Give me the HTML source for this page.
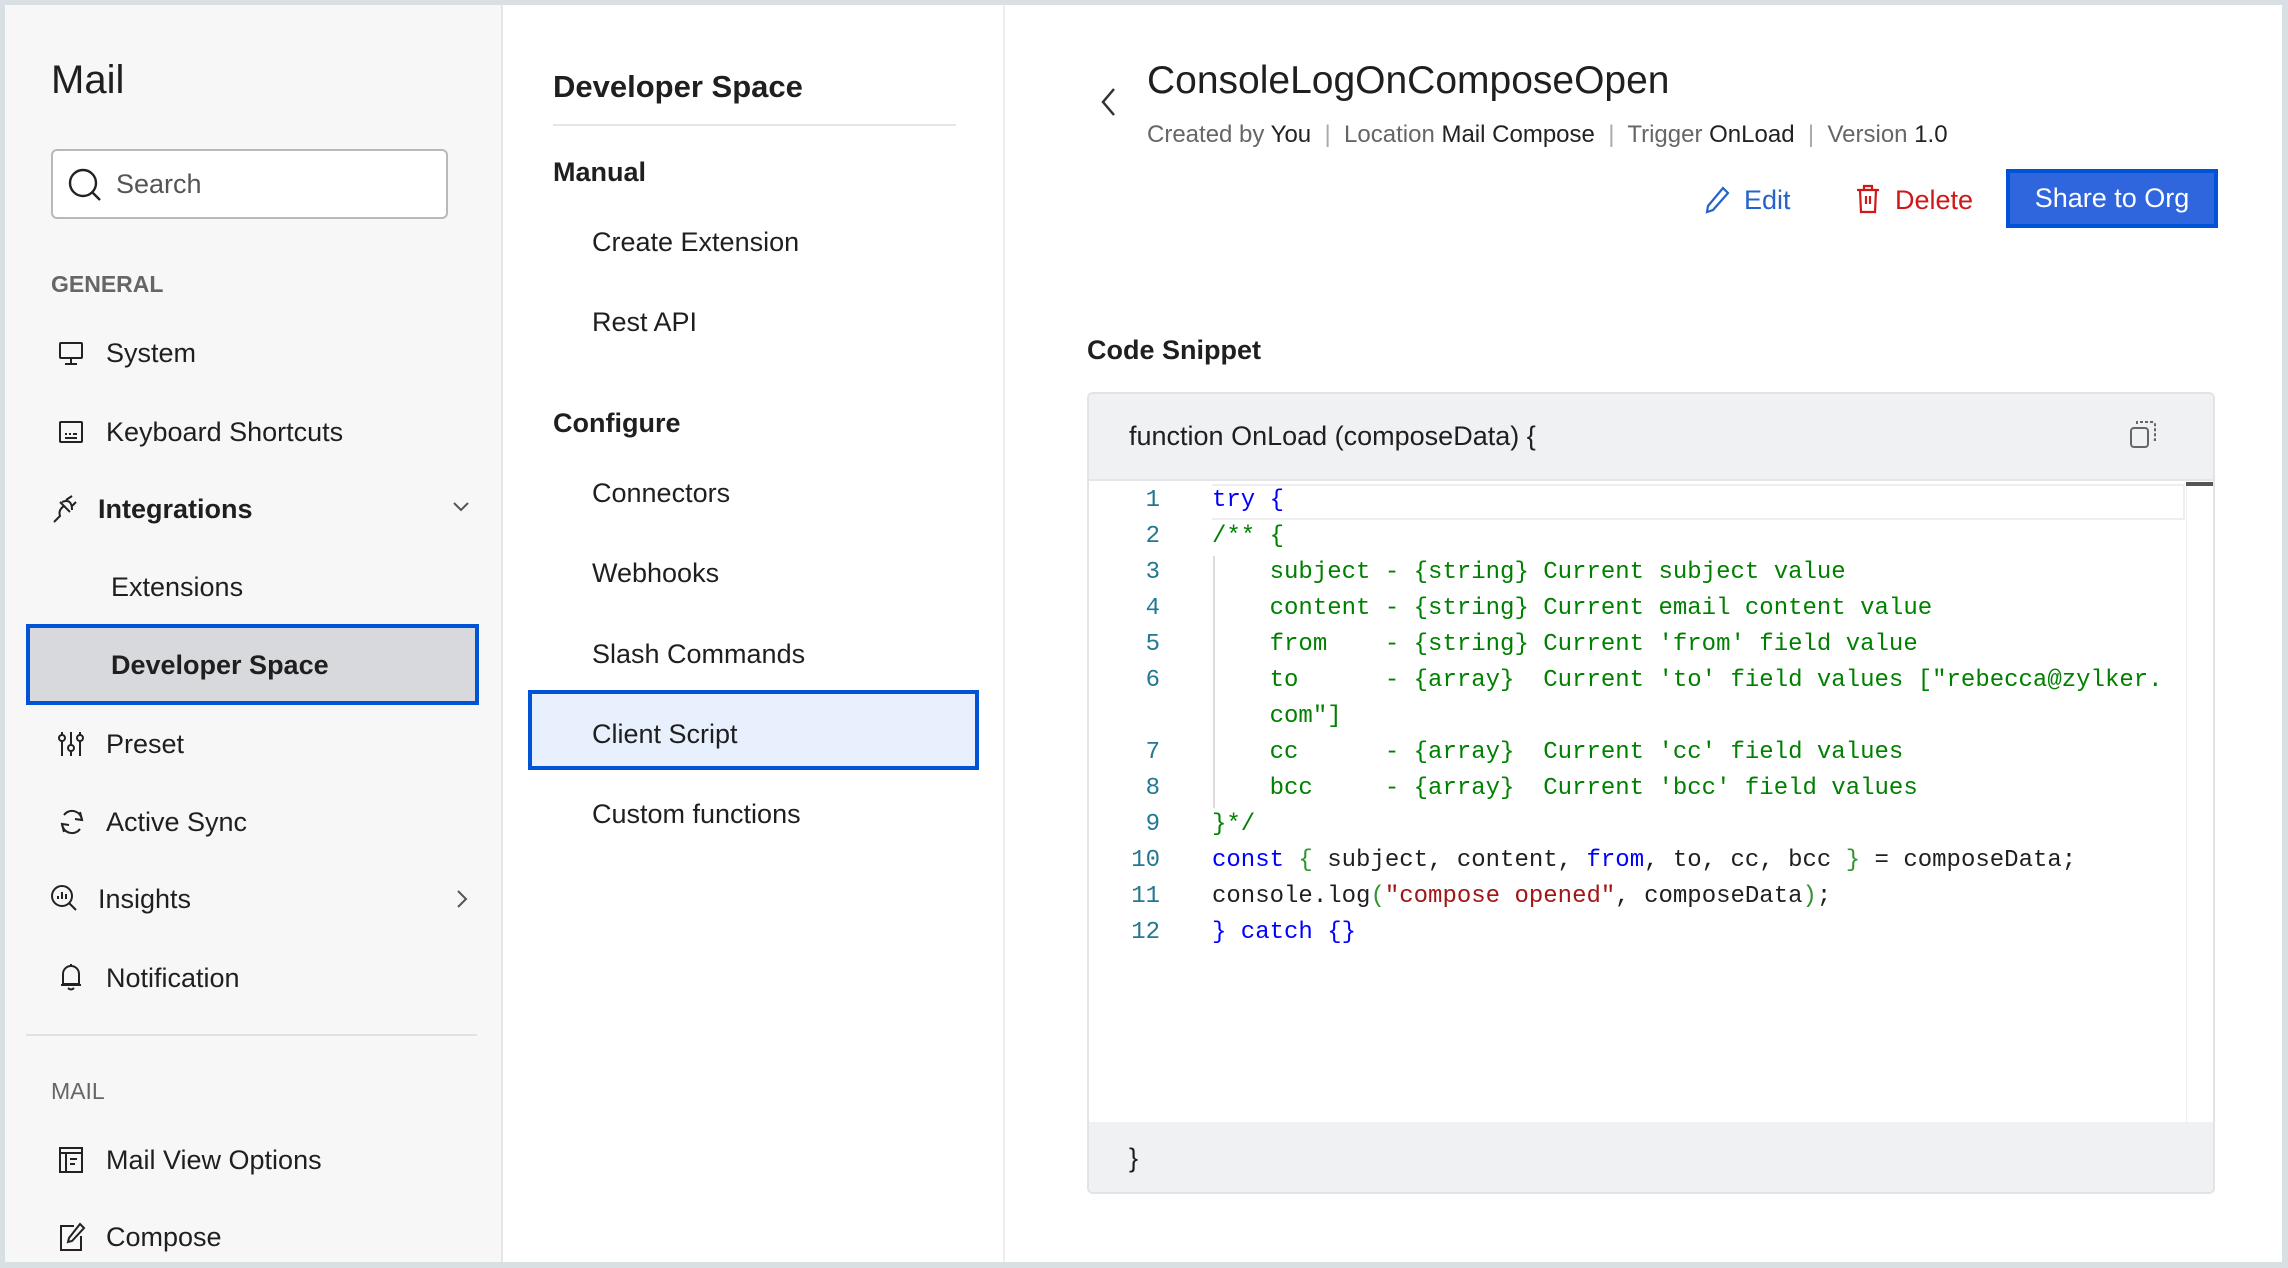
<!DOCTYPE html>
<html><head><meta charset="utf-8"><style>
*{margin:0;padding:0;box-sizing:border-box}
body{width:2288px;height:1268px;background:#d9e0e4;font-family:"Liberation Sans",sans-serif;color:#1f1f1f;position:relative;overflow:hidden}
.abs{position:absolute;white-space:nowrap}
#side{position:absolute;left:5px;top:5px;width:498px;height:1257px;background:#f7f7f7;border-right:2px solid #e6e6e6}
#mid{position:absolute;left:503px;top:5px;width:502px;height:1257px;background:#fff;border-right:2px solid #eeeeee}
#right{position:absolute;left:1005px;top:5px;width:1277px;height:1257px;background:#fff}
.t{font-size:27px;line-height:36px}
.ic{position:absolute}
.mono{font-family:"Liberation Mono",monospace;font-size:24px;line-height:36px}
pre.mono{white-space:pre}
.g{color:#008000}.b{color:#0000ff}.s{color:#a31515}.p{color:#319331}
.ln{position:absolute;width:60px;text-align:right;left:1100px;color:#237893}
</style></head><body>
<div id="side"></div><div id="mid"></div><div id="right"></div>

<!-- sidebar -->
<div class="abs" style="left:51px;top:56px;font-size:40px;line-height:48px">Mail</div>
<div class="abs" style="left:51px;top:149px;width:397px;height:70px;border:2px solid #b9b9b9;border-radius:6px;background:#fff"></div>
<svg class="ic" style="left:66px;top:166px" width="38" height="38" viewBox="0 0 38 38"><circle cx="17" cy="17" r="13" fill="none" stroke="#222" stroke-width="2.4"/><line x1="26" y1="26" x2="34" y2="34" stroke="#222" stroke-width="2.4"/></svg>
<div class="abs t" style="left:116px;top:166px;color:#555">Search</div>
<div class="abs" style="left:51px;top:270px;font-size:23px;line-height:28px;color:#666;font-weight:bold">GENERAL</div>

<svg class="ic" style="left:58px;top:341px" width="26" height="26" viewBox="0 0 26 26" fill="none" stroke="#222" stroke-width="2"><rect x="2" y="2" width="22" height="15" rx="1"/><line x1="13" y1="17" x2="13" y2="23"/><line x1="7" y1="23" x2="19" y2="23"/></svg>
<div class="abs t" style="left:106px;top:335px">System</div>
<svg class="ic" style="left:58px;top:420px" width="26" height="24" viewBox="0 0 26 24" fill="none" stroke="#222" stroke-width="2"><rect x="2" y="2" width="22" height="20" rx="1"/><line x1="7" y1="14" x2="9" y2="14"/><line x1="11" y1="14" x2="13" y2="14"/><line x1="15" y1="14" x2="19" y2="14"/><line x1="7" y1="18" x2="19" y2="18"/></svg>
<div class="abs t" style="left:106px;top:414px">Keyboard Shortcuts</div>
<svg class="ic" style="left:50px;top:494px" width="28" height="30" viewBox="0 0 28 30" fill="none" stroke="#222" stroke-width="2"><path d="M10 8 L20 18 M14 12 Q8 16 10 22 L4 28 M16 6 L22 2 M22 12 L26 8 M12 8 Q22 4 22 16"/></svg>
<div class="abs t" style="left:98px;top:491px;font-weight:bold">Integrations</div>
<svg class="ic" style="left:452px;top:501px" width="18" height="12" viewBox="0 0 18 12" fill="none" stroke="#555" stroke-width="2"><path d="M2 2 L9 9 L16 2"/></svg>
<div class="abs t" style="left:111px;top:569px">Extensions</div>
<div class="abs" style="left:26px;top:624px;width:453px;height:81px;background:#d8d9dc;border:4px solid #0053d4"></div>
<div class="abs t" style="left:111px;top:647px;font-weight:bold">Developer Space</div>
<svg class="ic" style="left:58px;top:730px" width="26" height="28" viewBox="0 0 26 28" fill="none" stroke="#222" stroke-width="2"><line x1="4" y1="2" x2="4" y2="26"/><line x1="13" y1="2" x2="13" y2="26"/><line x1="22" y1="2" x2="22" y2="26"/><circle cx="4" cy="8" r="3" fill="#f7f7f7"/><circle cx="13" cy="18" r="3" fill="#f7f7f7"/><circle cx="22" cy="8" r="3" fill="#f7f7f7"/></svg>
<div class="abs t" style="left:106px;top:726px">Preset</div>
<svg class="ic" style="left:58px;top:808px" width="28" height="28" viewBox="0 0 28 28" fill="none" stroke="#222" stroke-width="2"><path d="M24 12 A10 10 0 0 0 6 7 M4 16 A10 10 0 0 0 22 21"/><path d="M22 4 L24 12 L17 11 M6 24 L4 16 L11 17"/></svg>
<div class="abs t" style="left:106px;top:804px">Active Sync</div>
<svg class="ic" style="left:50px;top:884px" width="28" height="28" viewBox="0 0 28 28" fill="none" stroke="#222" stroke-width="2"><circle cx="12" cy="12" r="10"/><line x1="19" y1="19" x2="26" y2="26"/><line x1="8" y1="15" x2="8" y2="12"/><line x1="12" y1="15" x2="12" y2="8"/><line x1="16" y1="15" x2="16" y2="10"/></svg>
<div class="abs t" style="left:98px;top:881px">Insights</div>
<svg class="ic" style="left:456px;top:889px" width="12" height="20" viewBox="0 0 12 20" fill="none" stroke="#555" stroke-width="2"><path d="M2 2 L10 10 L2 18"/></svg>
<svg class="ic" style="left:58px;top:962px" width="26" height="30" viewBox="0 0 26 30" fill="none" stroke="#222" stroke-width="2"><path d="M13 2 L13 4 M5 22 L5 12 A8 8 0 0 1 21 12 L21 22 Z M3 23 L23 23 M10 26 Q13 29 16 26"/></svg>
<div class="abs t" style="left:106px;top:960px">Notification</div>
<div class="abs" style="left:26px;top:1034px;width:451px;height:2px;background:#e2e2e2"></div>
<div class="abs" style="left:51px;top:1077px;font-size:23px;line-height:28px;color:#666">MAIL</div>
<svg class="ic" style="left:58px;top:1146px" width="26" height="28" viewBox="0 0 26 28" fill="none" stroke="#222" stroke-width="2"><rect x="2" y="2" width="22" height="24"/><line x1="2" y1="7" x2="24" y2="7"/><line x1="8" y1="7" x2="8" y2="26"/><line x1="12" y1="13" x2="19" y2="13"/><line x1="12" y1="18" x2="17" y2="18"/></svg>
<div class="abs t" style="left:106px;top:1142px">Mail View Options</div>
<svg class="ic" style="left:58px;top:1222px" width="28" height="30" viewBox="0 0 28 30" fill="none" stroke="#222" stroke-width="2"><path d="M16 4 L3 4 L3 28 L23 28 L23 14"/><path d="M22 2 L26 6 L14 19 L10 20 L11 16 Z"/></svg>
<div class="abs t" style="left:106px;top:1219px">Compose</div>

<!-- middle -->
<div class="abs" style="left:553px;top:68px;font-size:31px;line-height:38px;font-weight:bold">Developer Space</div>
<div class="abs" style="left:553px;top:124px;width:403px;height:2px;background:#e6e6e6"></div>
<div class="abs t" style="left:553px;top:154px;font-weight:bold">Manual</div>
<div class="abs t" style="left:592px;top:224px">Create Extension</div>
<div class="abs t" style="left:592px;top:304px">Rest API</div>
<div class="abs t" style="left:553px;top:405px;font-weight:bold">Configure</div>
<div class="abs t" style="left:592px;top:475px">Connectors</div>
<div class="abs t" style="left:592px;top:555px">Webhooks</div>
<div class="abs t" style="left:592px;top:636px">Slash Commands</div>
<div class="abs" style="left:528px;top:690px;width:451px;height:80px;background:#e8f0fe;border:4px solid #0053d4"></div>
<div class="abs t" style="left:592px;top:716px">Client Script</div>
<div class="abs t" style="left:592px;top:796px">Custom functions</div>

<!-- right -->
<svg class="ic" style="left:1098px;top:86px" width="20" height="32" viewBox="0 0 20 32" fill="none" stroke="#333" stroke-width="2.5"><path d="M16 3 L5 16 L16 29"/></svg>
<div class="abs" style="left:1147px;top:57px;font-size:39px;line-height:48px">ConsoleLogOnComposeOpen</div>
<div class="abs" style="left:1147px;top:121px;font-size:24px;line-height:28px;color:#666">Created by <span style="color:#222">You</span> &nbsp;<span style="color:#aaa">|</span>&nbsp; Location <span style="color:#222">Mail Compose</span> &nbsp;<span style="color:#aaa">|</span>&nbsp; Trigger <span style="color:#222">OnLoad</span> &nbsp;<span style="color:#aaa">|</span>&nbsp; Version <span style="color:#222">1.0</span></div>
<svg class="ic" style="left:1704px;top:186px" width="26" height="28" viewBox="0 0 26 28" fill="none" stroke="#2563c9" stroke-width="2.2"><path d="M19 2 L24 7 L9 24 L3 26 L4 20 Z"/></svg>
<div class="abs t" style="left:1744px;top:182px;color:#2563c9">Edit</div>
<svg class="ic" style="left:1856px;top:184px" width="24" height="30" viewBox="0 0 24 30" fill="none" stroke="#d01818" stroke-width="2.2"><path d="M1 6 L23 6 M8 6 L8 2 L16 2 L16 6 M4 6 L5 28 L19 28 L20 6 M10 12 L10 20 M14 12 L14 20"/></svg>
<div class="abs t" style="left:1895px;top:182px;color:#d01818">Delete</div>
<div class="abs" style="left:2006px;top:169px;width:212px;height:59px;background:#2f66dd;border:4px solid #0053d4;color:#fff;font-size:27px;line-height:51px;text-align:center">Share to Org</div>

<div class="abs t" style="left:1087px;top:332px;font-weight:bold">Code Snippet</div>
<div class="abs" style="left:1087px;top:392px;width:1128px;height:802px;border:2px solid #e2e3e6;border-radius:6px;background:#fff;overflow:hidden">
  <div style="position:absolute;left:0;top:0;width:100%;height:87px;background:#f0f1f3;border-bottom:2px solid #e4e5e8"></div>
  <div style="position:absolute;left:0;bottom:0;width:100%;height:70px;background:#f0f1f3"></div>
  <div style="position:absolute;left:1097px;top:89px;width:1px;height:640px;background:#eeeeee"></div>
  <div style="position:absolute;left:1097px;top:88px;width:29px;height:4px;background:#555"></div>
  <div style="position:absolute;left:123px;top:90px;width:973px;height:36px;border:2px solid #eeeeee;border-left:none"></div>
  <div style="position:absolute;left:124px;top:162px;width:2px;height:252px;background:#dcdcdc"></div>
</div>
<div class="abs t" style="left:1129px;top:418px">function OnLoad (composeData) {</div>
<svg class="ic" style="left:2128px;top:420px" width="30" height="30" viewBox="0 0 30 30" fill="none" stroke="#666" stroke-width="2"><rect x="3" y="8" width="17" height="19" rx="3"/><path d="M9 4 L9 2 L24 2 Q27 2 27 5 L27 20 L24 20" stroke-dasharray="3 2"/></svg>
<div class="abs t" style="left:1129px;top:1140px">}</div>

<div class="mono">
<div class="ln abs" style="top:483px">1</div>
<div class="ln abs" style="top:519px">2</div>
<div class="ln abs" style="top:555px">3</div>
<div class="ln abs" style="top:591px">4</div>
<div class="ln abs" style="top:627px">5</div>
<div class="ln abs" style="top:663px">6</div>
<div class="ln abs" style="top:735px">7</div>
<div class="ln abs" style="top:771px">8</div>
<div class="ln abs" style="top:807px">9</div>
<div class="ln abs" style="top:843px">10</div>
<div class="ln abs" style="top:879px">11</div>
<div class="ln abs" style="top:915px">12</div>
<pre class="mono" style="position:absolute;left:1212px;top:483px"><span class="b">try {</span>
<span class="g">/** {</span>
<span class="g">    subject - {string} Current subject value</span>
<span class="g">    content - {string} Current email content value</span>
<span class="g">    from    - {string} Current 'from' field value</span>
<span class="g">    to      - {array}  Current 'to' field values ["rebecca@zylker.</span>
<span class="g">    com"]</span>
<span class="g">    cc      - {array}  Current 'cc' field values</span>
<span class="g">    bcc     - {array}  Current 'bcc' field values</span>
<span class="g">}*/</span>
<span class="b">const</span> <span class="p">{</span> subject, content, <span class="b">from</span>, to, cc, bcc <span class="p">}</span> = composeData;
console.log<span class="p">(</span><span class="s">"compose opened"</span>, composeData<span class="p">)</span>;
<span class="b">} catch {}</span></pre>
</div>
</body></html>
